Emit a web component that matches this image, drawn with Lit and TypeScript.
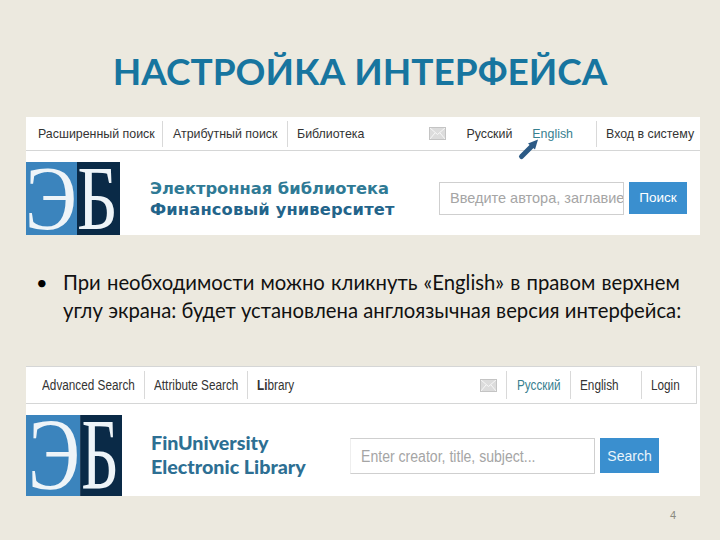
import { LitElement, html, css, svg } from "lit";
import { customElement, property } from "lit/decorators.js";

const SANS = css`"Liberation Sans", Arial, sans-serif`;

@customElement("eb-logo")
class EbLogo extends LitElement {
  @property({ type: Number }) split = 51;
  @property({ type: Number }) ex = -1;
  @property({ type: Number }) ew = 52;
  @property({ type: Number }) bx = 51;
  @property({ type: Number }) bw = 41;
  static styles = css`
    :host { display: block; flex: none; }
    svg { display: block; width: 100%; height: 100%; }
    text { font-family: "Liberation Serif", serif; fill: #eef4f8; font-size: 92px; }
  `;
  render() {
    return html`<svg viewBox="0 0 94 74" preserveAspectRatio="none">
      <rect width=${this.split} height="74" fill="#3b84bd"></rect>
      <rect x=${this.split} width=${94 - this.split} height="74" fill="#0a2a47"></rect>
      ${svg`<text x=${this.ex} y="68" textLength=${this.ew} lengthAdjust="spacingAndGlyphs">Э</text>
      <text x=${this.bx} y="68" textLength=${this.bw} lengthAdjust="spacingAndGlyphs">Б</text>`}
    </svg>`;
  }
}

@customElement("mail-icon")
class MailIcon extends LitElement {
  static styles = css`
    :host { display: block; width: 17px; height: 13px; flex: none; }
    svg { display: block; width: 100%; height: 100%; }
  `;
  render() {
    return html`<svg viewBox="0 0 17 13">
      <rect width="17" height="13" fill="#dcdcdc"></rect>
      <path d="M0.5 0.5L8.5 7.5L16.5 0.5M0.5 12.5L6 6M16.5 12.5L11 6" fill="none" stroke="#f7f7f7" stroke-width="1"></path>
      <rect x=".5" y=".5" width="16" height="12" fill="none" stroke="#c4c4c4"></rect>
    </svg>`;
  }
}

@customElement("top-shot")
class TopShot extends LitElement {
  static styles = css`
    :host { display: block; position: relative; background: #fff; width: 674px; height: 118px; font-family: ${SANS}; }
    .nav { display: flex; align-items: center; height: 33px; border-bottom: 1px solid #d5d6d6; font-size: 12.4px; color: #333; }
    .item { display: flex; align-items: center; height: 26px; white-space: nowrap; }
    .sep { border-right: 1px solid #d9d9d9; }
    .a { width: 137px; padding-left: 12px; box-sizing: border-box; }
    .b { width: 125px; padding-left: 10px; box-sizing: border-box; }
    .c { padding-left: 9px; }
    .mail { margin-left: 65px; }
    .ru { margin-left: 20px; }
    .en { margin-left: 20px; color: #37808f; }
    .login { margin-left: 23px; padding-left: 9px; border-left: 1px solid #d9d9d9; }
    .head { display: flex; height: 84px; }
    eb-logo { width: 94px; height: 73px; margin-top: 11px; }
    .brand { margin: 27px 0 0 30px; width: 289px; font-family: "DejaVu Sans", sans-serif; font-weight: 700; font-size: 16.3px; line-height: 21px; color: #2f7a95; }
    .brand b { display: block; white-space: nowrap; }
    .brand b + b { color: #23648a; letter-spacing: .15px; }
    .search { display: flex; margin-top: 31px; }
    .input { width: 185px; height: 33px; box-sizing: border-box; border: 1px solid #cfcfcf; padding-left: 10px; font-size: 14.5px; line-height: 30px; color: #a5a5a5; overflow: hidden; white-space: nowrap; }
    .btn { width: 58px; height: 32px; margin-left: 5px; background: #3a8fcf; color: #fff; font-size: 13.5px; line-height: 31px; text-align: center; }
    .arrow { position: absolute; left: 487px; top: 20px; width: 30px; height: 34px; }
  `;
  render() {
    return html`
      <div class="nav">
        <div class="item a sep">Расширенный поиск</div>
        <div class="item b sep">Атрибутный поиск</div>
        <div class="item c">Библиотека</div>
        <mail-icon class="mail"></mail-icon>
        <div class="item ru">Русский</div>
        <div class="item en">English</div>
        <div class="item login">Вход в систему</div>
      </div>
      <div class="head">
        <eb-logo></eb-logo>
        <div class="brand"><b>Электронная библиотека</b><b>Финансовый университет</b></div>
        <div class="search">
          <div class="input">Введите автора, заглавие</div>
          <div class="btn">Поиск</div>
        </div>
      </div>
      <svg class="arrow" viewBox="0 0 30 34">
        <path d="M8.5 19.5L19 9" stroke="#2c5a85" stroke-width="5" stroke-linecap="round" fill="none"></path>
        <path d="M15 6.5L25 2.5L22 12.5Z" fill="#2c5a85"></path>
      </svg>
    `;
  }
}

@customElement("bottom-shot")
class BottomShot extends LitElement {
  static styles = css`
    :host { display: block; background: #fff; width: 674px; height: 130px; font-family: ${SANS}; }
    .nav { display: flex; align-items: center; width: 670px; height: 36px; border-top: 1px solid #d5d6d6; border-right: 1px solid #d5d6d6; border-bottom: 1px solid #d5d6d6; font-size: 14px; color: #333; }
    .nav span { display: block; white-space: nowrap; transform: scaleX(.84); transform-origin: left center; }
    .cell { display: flex; align-items: center; height: 28px; box-sizing: border-box; flex: none; }
    .sep { border-right: 1px solid #d9d9d9; }
    .a { width: 119px; padding-left: 16px; }
    .b { width: 103px; padding-left: 9px; }
    .c { width: 232px; padding-left: 9px; }
    .c b { font-weight: 700; }
    mail-icon { margin-right: 9px; }
    .d { width: 65px; padding-left: 10px; border-left: 1px solid #d9d9d9; color: #37808f; }
    .e { width: 71px; padding-left: 9px; }
    .f { padding-left: 9px; }
    .head { display: flex; height: 92px; }
    eb-logo { width: 96px; height: 81px; margin-top: 11px; }
    .brand { margin: 27px 0 0 29px; width: 199px; font-family: Lato, sans-serif; font-weight: 700; font-size: 19.7px; line-height: 24px; color: #2d6f93; }
    .brand b { display: block; white-space: nowrap; }
    .search { display: flex; margin-top: 34px; }
    .input { width: 245px; height: 36px; box-sizing: border-box; border: 1px solid #cfcfcf; border-left-color: #eee; padding-left: 10px; font-size: 16px; line-height: 36px; color: #a5a5a5; white-space: nowrap; overflow: hidden; }
    .input span { display: inline-block; transform: scaleX(.88); transform-origin: left center; }
    .btn { width: 59px; height: 35px; margin-left: 5px; background: #3a8fcf; color: #eaf5fb; font-size: 14px; line-height: 36px; text-align: center; }
  `;
  render() {
    return html`
      <div class="nav">
        <div class="cell a sep"><span>Advanced Search</span></div>
        <div class="cell b sep"><span>Attribute Search</span></div>
        <div class="cell c"><span><b>Li</b>brary</span></div>
        <mail-icon></mail-icon>
        <div class="cell d sep"><span>Русский</span></div>
        <div class="cell e sep"><span>English</span></div>
        <div class="cell f"><span>Login</span></div>
      </div>
      <div class="head">
        <eb-logo split="53" ex="2" ew="51" bx="54" bw="37"></eb-logo>
        <div class="brand"><b>FinUniversity</b><b>Electronic Library</b></div>
        <div class="search">
          <div class="input"><span>Enter creator, title, subject...</span></div>
          <div class="btn">Search</div>
        </div>
      </div>
    `;
  }
}

@customElement("app-root")
class AppRoot extends LitElement {
  static styles = css`
    :host { display: block; position: relative; width: 720px; height: 540px; overflow: hidden; background: #ece9df; font-family: Lato, "Open Sans", sans-serif; }
    h1 { margin: 0; height: 117px; box-sizing: border-box; padding-top: 46px; text-align: center; font-size: 37px; line-height: 50px; font-weight: 700; color: #17759f; white-space: nowrap; }
    .shot { margin-left: 26px; }
    .list { height: 131px; padding: 33px 0 0 30px; box-sizing: border-box; display: flex; }
    .dot { width: 33px; padding-left: 6px; box-sizing: border-box; flex: none; font-size: 20px; line-height: 28px; }
    .txt { font-size: 20.3px; line-height: 28px; color: #111; white-space: nowrap; }
    .first { word-spacing: 1px; }
    .num { position: absolute; left: 670px; top: 509px; font-size: 11px; color: #8a8a80; font-family: "Liberation Sans", sans-serif; }
  `;
  render() {
    return html`
      <h1>НАСТРОЙКА ИНТЕРФЕЙСА</h1>
      <top-shot class="shot"></top-shot>
      <div class="list">
        <div class="dot">•</div>
        <div class="txt"><span class="first">При необходимости можно кликнуть «English» в правом верхнем</span><br />углу экрана: будет установлена англоязычная версия интерфейса:</div>
      </div>
      <bottom-shot class="shot"></bottom-shot>
      <div class="num">4</div>
    `;
  }
}
